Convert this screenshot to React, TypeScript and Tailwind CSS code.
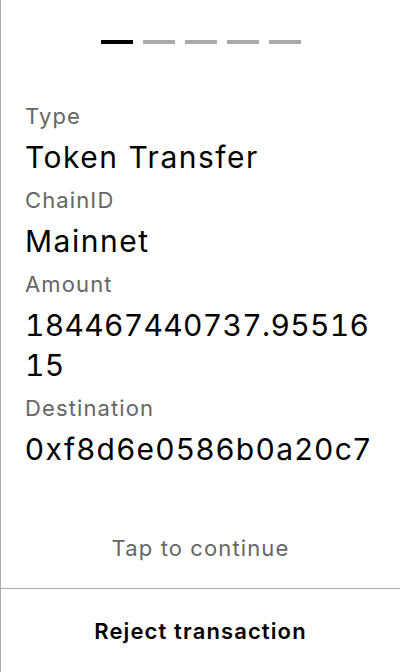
import React from "react";

const fields = [
  { label: "Type", value: "Token Transfer" },
  { label: "ChainID", value: "Mainnet" },
  { label: "Amount", value: "184467440737.9551615", numeric: true },
  { label: "Destination", value: "0xf8d6e0586b0a20c7" },
];

export default function App() {
  const step = 0;

  return (
    <div
      className="h-screen flex flex-col bg-white border-l border-[#aaaaaa] text-black tracking-[0.07em]"
      style={{ fontFamily: "Inter, 'Noto Sans', sans-serif" }}
    >
      {/* Step indicator */}
      <div className="flex justify-center gap-[10px] pt-10">
        {[0, 1, 2, 3, 4].map((i) => (
          <div key={i} className={`w-8 h-1 ${i === step ? "bg-black" : "bg-[#aaaaaa]"}`} />
        ))}
      </div>

      <div className="flex-1 flex flex-col px-6 pt-[58px]">
        <div className="flex flex-col gap-[9px]">
          {fields.map((f) => (
            <div key={f.label}>
              <div className="text-[22px] leading-7 text-[#666666] mb-[7px]">{f.label}</div>
              <div
                className={`text-[30px] leading-10 break-all ${
                  f.numeric ? "tabular-nums tracking-[0.01em]" : "tracking-[0.05em]"
                }`}
              >
                {f.value}
              </div>
            </div>
          ))}
        </div>
        <div className="mt-auto pb-[26px] text-center text-[22px] leading-7 text-[#666666]">Tap to continue</div>
      </div>

      <button className="border-t border-[#aaaaaa] h-[84px] text-[22px] leading-7 font-semibold text-black">
        Reject transaction
      </button>
    </div>
  );
}
